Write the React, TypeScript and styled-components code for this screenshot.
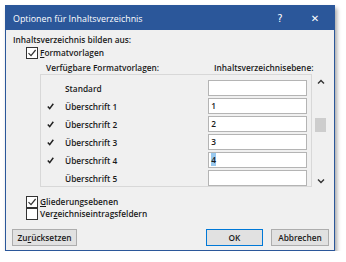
import styled, { createGlobalStyle } from "styled-components";

const GlobalStyle = createGlobalStyle`
  body {
    margin: 0;
    background: #ffffff;
    font-family: "Open Sans", "Noto Sans", "Liberation Sans", sans-serif;
    font-size: 8.3px;
    font-weight: 600;
    color: #1a1a1a;
  }
`;

//rows shown in the style list
const styleRows = [
  { name: "Standard", level: "", checked: false },
  { name: "Überschrift 1", level: "1", checked: true },
  { name: "Überschrift 2", level: "2", checked: true },
  { name: "Überschrift 3", level: "3", checked: true },
  { name: "Überschrift 4", level: "4", checked: true, selected: true },
  { name: "Überschrift 5", level: "", checked: false },
];

const CheckMark = () => (
  <svg width="10" height="10" viewBox="0 0 10 10">
    <path d="M1.5 5.2 L4 7.7 L8.6 2" fill="none" stroke="#333" strokeWidth="1.2" />
  </svg>
);

const ListTick = () => (
  <svg width="7" height="7" viewBox="0 0 7 7">
    <path d="M0.8 3.6 L2.7 5.6 L6.3 0.8" fill="none" stroke="#222" strokeWidth="1.5" />
  </svg>
);

const Arrow = ({ up }: { up?: boolean }) => (
  <svg width="8" height="6" viewBox="0 0 8 6">
    <path
      d={up ? "M1 4.5 L4 1.5 L7 4.5" : "M1 1.5 L4 4.5 L7 1.5"}
      fill="none"
      stroke="#333"
      strokeWidth="1.4"
    />
  </svg>
);

const App = () => {
  return (
    <>
      <GlobalStyle />
      <Page>
        <Dialog>
          <TitleBar>
            <TitleText>Optionen für Inhaltsverzeichnis</TitleText>
            <TitleButton $width={32}>?</TitleButton>
            <TitleButton $width={38}>✕</TitleButton>
          </TitleBar>
          <Body>
            <Label>Inhaltsverzeichnis bilden aus:</Label>
            <CheckRow>
              <Box>
                <CheckMark />
              </Box>
              <span>
                <u>F</u>ormatvorlagen
              </span>
            </CheckRow>
            <Headers>
              <span>Verfügbare Formatvorlagen:</span>
              <LevelHeader>Inhaltsverzeichnisebene:</LevelHeader>
            </Headers>
            <ListArea>
              <ListBox>
                {styleRows.map((row) => (
                  <StyleRow key={row.name}>
                    <Tick>{row.checked && <ListTick />}</Tick>
                    <StyleName>{row.name}</StyleName>
                    <LevelInput>
                      {row.selected ? <Selected>{row.level}</Selected> : row.level}
                    </LevelInput>
                  </StyleRow>
                ))}
              </ListBox>
              <ScrollBar>
                <Arrow up />
                <Thumb />
                <Arrow />
              </ScrollBar>
            </ListArea>
            <CheckRow $top={9}>
              <Box>
                <CheckMark />
              </Box>
              <span>
                <u>G</u>liederungsebenen
              </span>
            </CheckRow>
            <CheckRow>
              <Box />
              <span>
                Ver<u>z</u>eichniseintragsfeldern
              </span>
            </CheckRow>
            <ButtonRow>
              <Button $width={65}>
                Zu<u>r</u>ücksetzen
              </Button>
              <Spacer />
              <Button $width={57} $default>
                OK
              </Button>
              <Button $width={58}>Abbrechen</Button>
            </ButtonRow>
          </Body>
        </Dialog>
      </Page>
    </>
  );
};

const Page: any = styled.div`
  padding: 5px 0 0 5px;
`;

const Dialog: any = styled.div`
  width: 328px;
  height: 244px;
  border: 1px solid #2b579a;
  background: #f0f0f0;
  box-shadow: 2px 3px 4px rgba(0, 0, 0, 0.35);
  display: flex;
  flex-direction: column;
`;

const TitleBar: any = styled.div`
  height: 24px;
  flex-shrink: 0;
  background: #2b579a;
  color: #ffffff;
  display: flex;
  align-items: center;
  padding-left: 7px;
  font-weight: 400;
`;

const TitleText: any = styled.div`
  flex: 1;
  font-size: 8.9px;
`;

const TitleButton: any = styled.div<{ $width: number }>`
  width: ${(p) => p.$width}px;
  text-align: center;
  font-size: 10px;
  font-family: "DejaVu Sans", sans-serif;
`;

const Body: any = styled.div`
  flex: 1;
  padding: 3px 5px 0 7px;
  display: flex;
  flex-direction: column;
  white-space: nowrap;
`;

const Label: any = styled.div`
  height: 14px;
  line-height: 14px;
`;

const CheckRow: any = styled.div<{ $top?: number }>`
  display: flex;
  align-items: center;
  gap: 2px;
  height: 12px;
  line-height: 12px;
  margin-top: ${(p) => p.$top ?? 0}px;
  margin-left: 13px;
`;

const Box: any = styled.div`
  width: 10px;
  height: 10px;
  border: 1px solid #333;
  background: #ffffff;
  display: flex;
  align-items: center;
  justify-content: center;
  flex-shrink: 0;
`;

const Headers: any = styled.div`
  display: flex;
  width: 274px;
  box-sizing: border-box;
  height: 12px;
  line-height: 12px;
  margin: 3px 0 0 27px;
  padding: 0 4px 0 6px;
  span:first-child {
    flex: 1;
  }
`;

const LevelHeader: any = styled.span`
  width: 96px;
`;

const ListArea: any = styled.div`
  display: flex;
  margin-left: 27px;
`;

const ListBox: any = styled.div`
  width: 274px;
  height: 113px;
  box-sizing: border-box;
  border: 1px solid #d8d8d8;
  padding: 5px 4px 0 0;
  display: flex;
  flex-direction: column;
  gap: 2px;
  overflow: hidden;
`;

const StyleRow: any = styled.div`
  display: flex;
  align-items: center;
  height: 16px;
  flex-shrink: 0;
`;

const Tick: any = styled.div`
  width: 24px;
  padding-left: 6px;
  box-sizing: border-box;
  display: flex;
  align-items: center;
`;

const StyleName: any = styled.div`
  flex: 1;
`;

const LevelInput: any = styled.div`
  width: 95px;
  height: 14px;
  line-height: 14px;
  border: 1px solid #b4b4b4;
  background: #ffffff;
  padding-left: 2px;
`;

const Selected: any = styled.span`
  background: #99c9ef;
  padding: 1px 0;
`;

const ScrollBar: any = styled.div`
  width: 17px;
  height: 113px;
  box-sizing: border-box;
  display: flex;
  flex-direction: column;
  align-items: center;
  padding: 5px 0 3px;
  svg:last-child {
    margin-top: auto;
  }
`;

const Thumb: any = styled.div`
  width: 11px;
  height: 14px;
  background: #cdcdcd;
  margin-top: 33px;
`;

const ButtonRow: any = styled.div`
  display: flex;
  gap: 8px;
  margin: 9px 0 0 -1px;
`;

const Spacer: any = styled.div`
  flex: 1;
`;

const Button: any = styled.div<{ $width: number; $default?: boolean }>`
  width: ${(p) => p.$width}px;
  height: 17px;
  line-height: 15px;
  box-sizing: border-box;
  text-align: center;
  background: #e1e1e1;
  border: 1px solid ${(p) => (p.$default ? "#0078d7" : "#adadad")};
`;

export default App;
